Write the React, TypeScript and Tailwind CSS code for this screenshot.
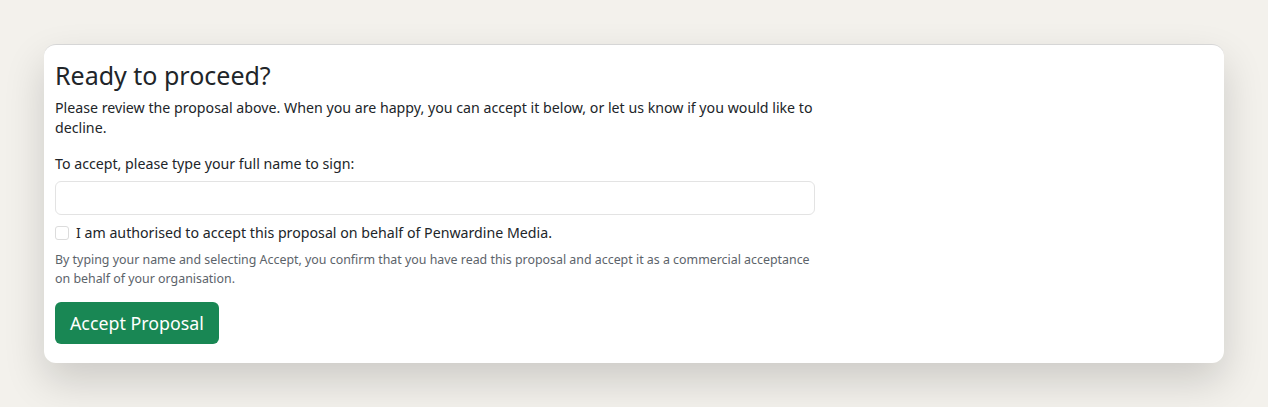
import React, { useState } from 'react';

const App = () => {
  const [name, setName] = useState('');
  const [authorised, setAuthorised] = useState(false);

  return (
    <div
      className="min-h-screen bg-[#f3f1ec] px-[44px] pt-[44px] pb-[44px]"
      style={{ fontFamily: '"Noto Sans", "Open Sans", sans-serif' }}
    >
      <div className="bg-white rounded-[12px] border-t border-[#d6d6d6] shadow-[0_18px_40px_rgba(0,0,0,0.16)] px-[11px] pt-[14px] pb-[19px] text-[#212529]">
        <h2 className="text-[25px] leading-[32px] font-normal mb-[7px]">Ready to proceed?</h2>
        <p className="text-[14.2px] leading-[20px] max-w-[760px] mb-[16px]">
          Please review the proposal above. When you are happy, you can accept it below, or let us know if you would like to decline.
        </p>
        <label className="block text-[14.2px] leading-[20px] mb-[7px]">To accept, please type your full name to sign:</label>
        <input
          type="text"
          value={name}
          onChange={e => setName(e.target.value)}
          className="block w-[760px] h-[34px] rounded-[6px] border border-[#e3e3e3] px-3 text-[14px] outline-none"
        />
        <label className="flex items-center gap-[7px] mt-[8px] text-[14.2px] leading-[20px]">
          <input
            type="checkbox"
            checked={authorised}
            onChange={e => setAuthorised(e.target.checked)}
            className="appearance-none w-[14px] h-[14px] rounded-[3px] border border-[#dcdcdc] bg-white checked:bg-[#198754]"
          />
          I am authorised to accept this proposal on behalf of Penwardine Media.
        </label>
        <p className="text-[12.4px] leading-[19px] text-[#5c636a] max-w-[760px] mt-[7px] mb-[14px]">
          By typing your name and selecting Accept, you confirm that you have read this proposal and accept it as a commercial acceptance on behalf of your organisation.
        </p>
        <button className="bg-[#198754] text-white text-[17.8px] leading-[26px] rounded-[6px] px-[15px] py-[8px]">
          Accept Proposal
        </button>
      </div>
    </div>
  );
};

export default App;
